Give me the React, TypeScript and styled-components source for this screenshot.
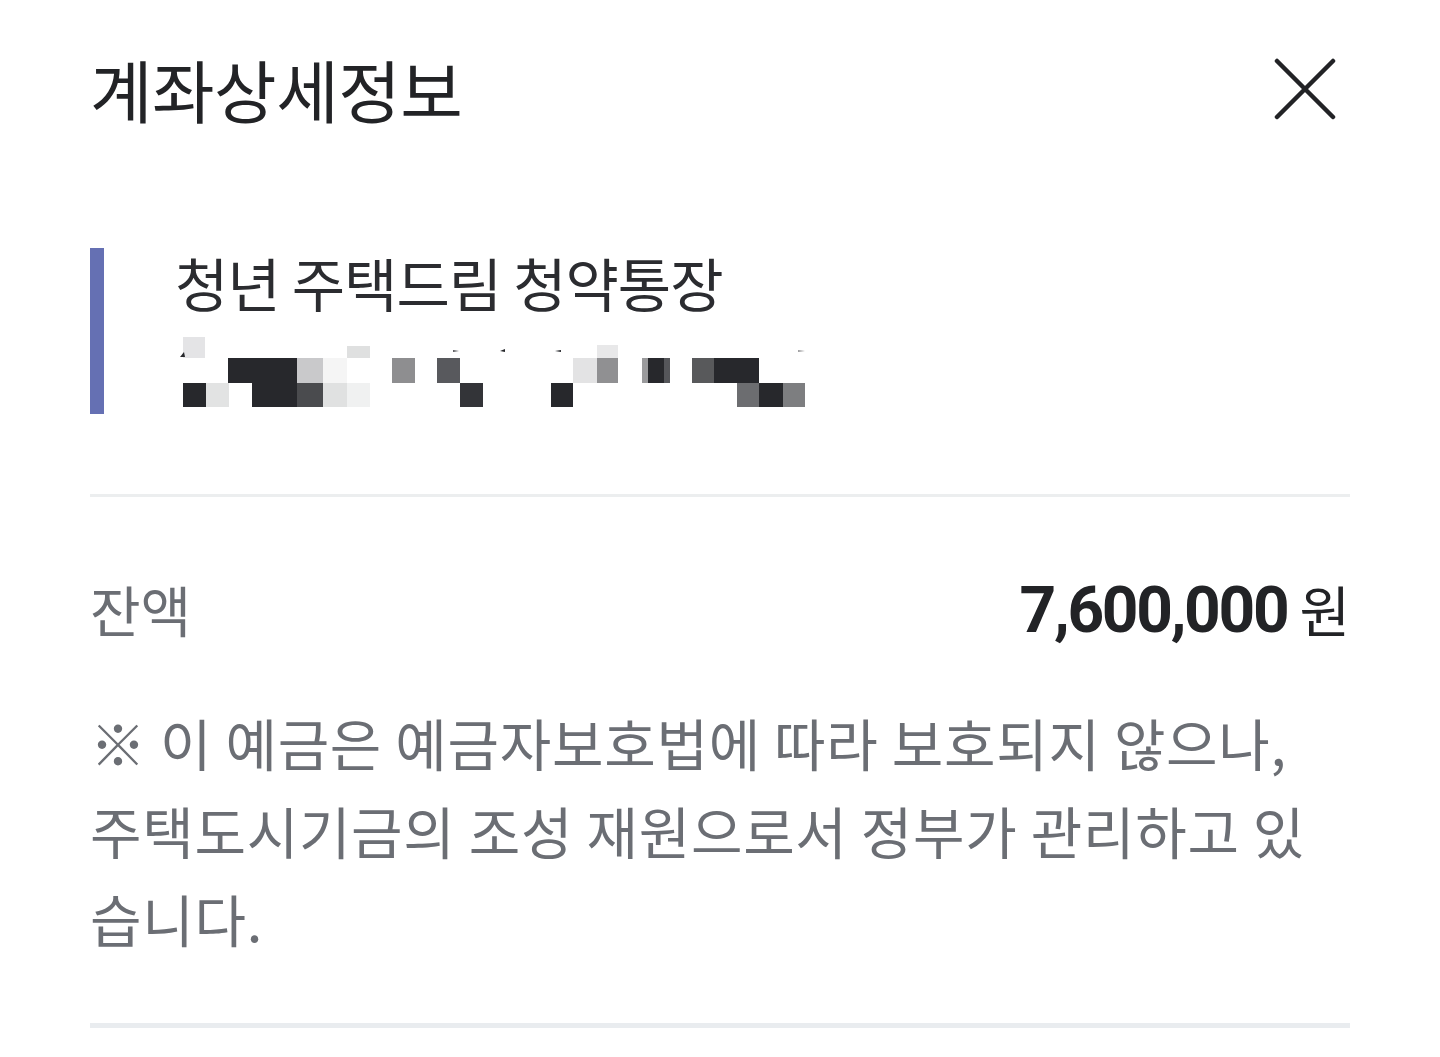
import React from 'react';
import styled, { createGlobalStyle } from 'styled-components';

const GlobalStyle = createGlobalStyle`
  html, body {
    margin: 0;
    padding: 0;
    background: #ffffff;
  }
  body {
    font-family: "Noto Sans CJK KR", "Noto Sans", sans-serif;
    color: #222326;
  }
`;

const Page = styled.div`
  width: 1440px;
  height: 1057px;
  box-sizing: border-box;
  padding: 0 90px;
  overflow: hidden;
  display: flex;
  flex-direction: column;
`;

/*--- HEADER ---*/

const Header = styled.header`
  height: 178px;
  display: flex;
  align-items: center;
  justify-content: space-between;
`;

const Title = styled.h1`
  margin: 0;
  font-size: 68px;
  font-weight: 400;
  letter-spacing: -0.5px;
  line-height: 1;
  color: #222326;
`;

const CloseButton = styled.button`
  width: 70px;
  height: 70px;
  margin-right: 10px;
  padding: 0;
  border: none;
  background: none;
  display: flex;
  align-items: center;
  justify-content: center;
  cursor: pointer;
`;

/*--- ACCOUNT ---*/

const Account = styled.section`
  margin-top: 70px;
  display: flex;
  align-items: stretch;
`;

const AccentBar = styled.div`
  width: 14px;
  flex-shrink: 0;
  background: #6570b3;
`;

const AccountInfo = styled.div`
  padding: 0 0 7px 71px;
  display: flex;
  flex-direction: column;
`;

const ProductName = styled.div`
  font-size: 58px;
  line-height: 68px;
  letter-spacing: -1px;
  color: #2b2c30;
`;

const Mosaic = styled.svg`
  display: block;
  margin-top: 19px;
`;

const Divider = styled.hr<{ $thick?: boolean }>`
  margin: 0;
  border: none;
  height: ${(p) => (p.$thick ? '5px' : '3px')};
  background: ${(p) => (p.$thick ? '#e9ecef' : '#eceeef')};
`;

/*--- BALANCE ---*/

const BalanceRow = styled.div`
  margin-top: 78px;
  height: 66px;
  display: flex;
  align-items: center;
  justify-content: space-between;
`;

const Label = styled.span`
  font-size: 55px;
  letter-spacing: 0;
  color: #6b6e74;
`;

const Amount = styled.span`
  display: flex;
  align-items: baseline;
  gap: 12px;
`;

const Number = styled.span`
  font-family: Roboto, "Noto Sans", sans-serif;
  font-weight: 700;
  font-size: 64px;
  letter-spacing: -2.3px;
  color: #222326;
`;

const Unit = styled.span`
  font-size: 55px;
  color: #222326;
`;

const Note = styled.p`
  margin: 57px 0 0;
  font-size: 56px;
  line-height: 88px;
  letter-spacing: 0.7px;
  color: #6b6e74;
  white-space: nowrap;
`;

const BottomDivider = styled(Divider)`
  margin-top: 61px;
`;

type Block = [number, number, number, number, string];

// pixelated account number, page coords [x1, x2, y1, y2, colour]
const blocks: Block[] = [
  [183, 205, 337, 358, '#e4e4e6'],
  [347, 370, 346, 358, '#dfe0e0'],
  [597, 618, 345, 358, '#e8e8e9'],
  [228, 297, 358, 383, '#27282c'],
  [297, 323, 358, 383, '#c9c9cb'],
  [323, 347, 358, 383, '#f5f5f5'],
  [392, 415, 358, 383, '#8e8e90'],
  [437, 460, 358, 383, '#58595d'],
  [573, 597, 358, 383, '#e3e3e4'],
  [597, 618, 358, 383, '#909092'],
  [642, 648, 358, 383, '#9a9a9c'],
  [648, 664, 358, 383, '#27282c'],
  [664, 670, 358, 383, '#55565a'],
  [692, 714, 358, 383, '#58595b'],
  [714, 759, 358, 383, '#27282c'],
  [183, 206, 383, 407, '#27282c'],
  [206, 229, 383, 407, '#e2e3e3'],
  [252, 297, 383, 407, '#27282c'],
  [297, 323, 383, 407, '#4a4b4e'],
  [323, 347, 383, 407, '#e0e1e1'],
  [347, 370, 383, 407, '#f0f1f1'],
  [460, 483, 383, 407, '#333438'],
  [551, 573, 383, 407, '#27282c'],
  [737, 759, 383, 407, '#6c6d70'],
  [759, 783, 383, 407, '#27282c'],
  [783, 805, 383, 407, '#7d7e80'],
];

const OX = 175;
const OY = 335;

const CloseIcon = () => (
  <svg width="62" height="62" viewBox="0 0 62 62">
    <path d="M3 3 L59 59 M59 3 L3 59" stroke="#222326" strokeWidth="4.5" strokeLinecap="round" />
  </svg>
);

export default function App() {
  return (
    <>
      <GlobalStyle />
      <Page>
        <Header>
          <Title>계좌상세정보</Title>
          <CloseButton aria-label="닫기">
            <CloseIcon />
          </CloseButton>
        </Header>

        <Account>
          <AccentBar />
          <AccountInfo>
            <ProductName>청년 주택드림 청약통장</ProductName>
            <Mosaic width="640" height="72" viewBox="0 0 640 72">
              {blocks.map(([x1, x2, y1, y2, c], i) => (
                <rect key={i} x={x1 - OX} y={y1 - OY} width={x2 - x1} height={y2 - y1} fill={c} />
              ))}
              <path d="M5 22 L9 17 L10 22 Z" fill="#27282c" />
              <path d="M278 15 L284 16 L278 17 Z" fill="#55565a" />
              <path d="M325 16 L330 14 L330 17 Z" fill="#27282c" />
              <path d="M380 16 L386 15 L386 17 Z" fill="#27282c" />
              <path d="M623 15 L630 16 L623 17 Z" fill="#9a9a9c" />
            </Mosaic>
          </AccountInfo>
        </Account>

        <Divider style={{ marginTop: 80 }} />

        <BalanceRow>
          <Label>잔액</Label>
          <Amount>
            <Number>7,600,000</Number>
            <Unit>원</Unit>
          </Amount>
        </BalanceRow>

        <Note>
          ※ 이 예금은 예금자보호법에 따라 보호되지 않으나,
          <br />
          주택도시기금의 조성 재원으로서 정부가 관리하고 있
          <br />
          습니다.
        </Note>

        <BottomDivider $thick />
      </Page>
    </>
  );
}
